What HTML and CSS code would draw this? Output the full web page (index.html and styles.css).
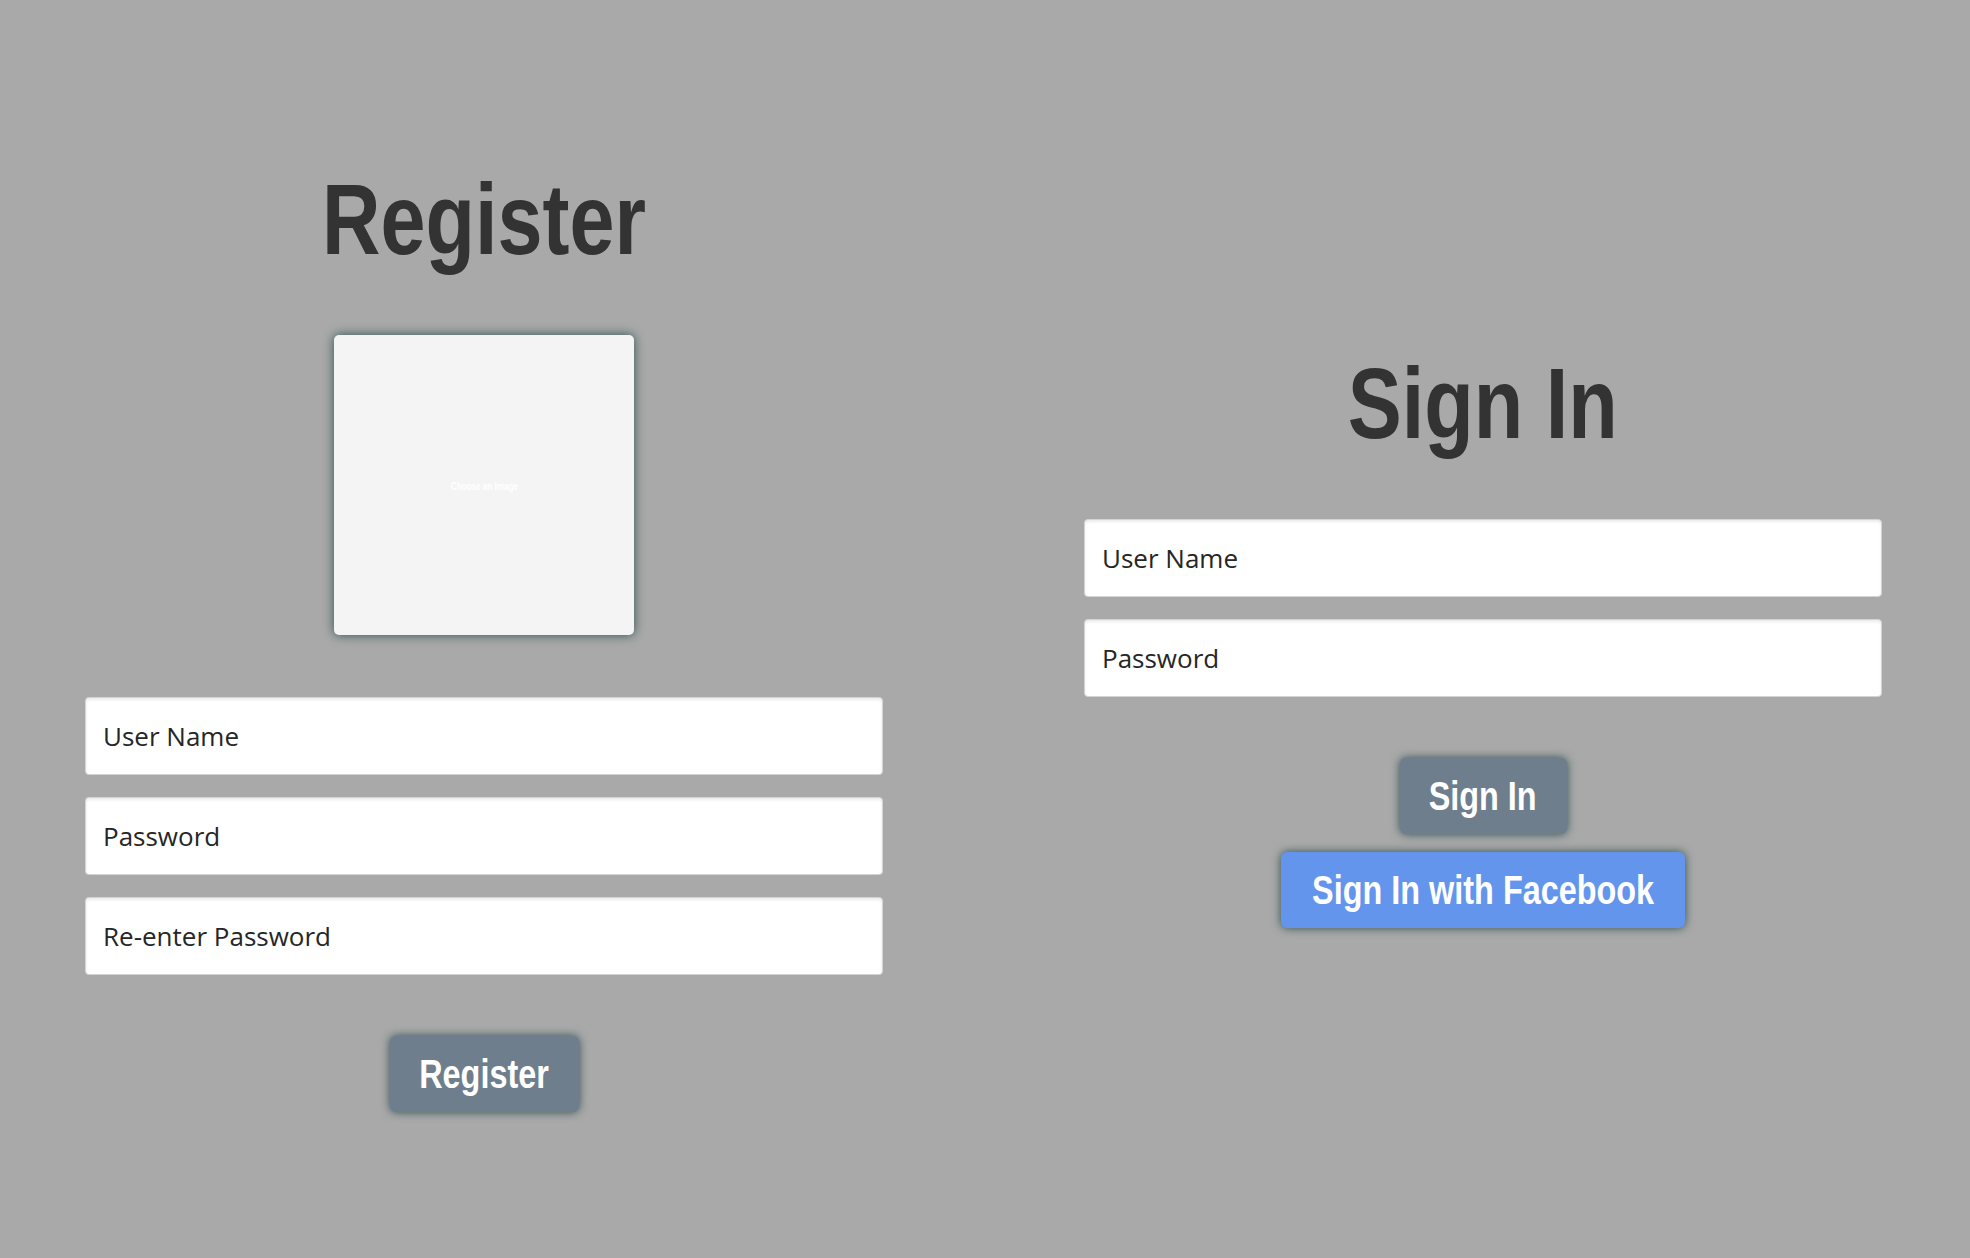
FILE: index.html
```html
<!DOCTYPE html>
<html lang="en">
<head>
<meta charset="utf-8">
<title>Register / Sign In</title>
<link rel="stylesheet" href="styles.css">
</head>
<body>
<main class="page">
  <section class="column">
    <h1 class="title"><span class="narrow">Register</span></h1>
    <div class="image-picker"><span class="image-label narrow">Choose an Image</span></div>
    <div class="fields">
      <input class="field" type="text" placeholder="User Name">
      <input class="field" type="password" placeholder="Password">
      <input class="field" type="password" placeholder="Re-enter Password">
    </div>
    <button class="btn btn-slate btn-register" type="button"><span class="narrow">Register</span></button>
  </section>
  <section class="column">
    <h1 class="title"><span class="narrow">Sign In</span></h1>
    <div class="fields">
      <input class="field" type="text" placeholder="User Name">
      <input class="field" type="password" placeholder="Password">
    </div>
    <div class="actions">
      <button class="btn btn-slate btn-signin" type="button"><span class="narrow">Sign In</span></button>
      <button class="btn btn-facebook" type="button"><span class="narrow">Sign In with Facebook</span></button>
    </div>
  </section>
</main>
</body>
</html>
```

FILE: styles.css
```css
* { box-sizing: border-box; }

html, body {
  margin: 0;
  padding: 0;
  background: #a9a9a9;
}

.page {
  height: 1258px;
  padding: 23px 87px 0 85px;
  display: flex;
  align-items: center;
  gap: 201px;
}

.column {
  width: 798px;
  display: flex;
  flex-direction: column;
  align-items: center;
}

/* Arial Narrow look: Liberation Sans compressed horizontally */
.narrow {
  display: inline-block;
  transform: scaleX(0.81);
  white-space: nowrap;
}

.title {
  margin: 0 0 66px;
  font-family: "Liberation Sans", Arial, sans-serif;
  font-weight: bold;
  font-size: 100px;
  line-height: 100px;
  color: #333333;
  text-align: center;
  width: 100%;
}

.image-picker {
  width: 300px;
  height: 300px;
  margin-bottom: 62px;
  background: #f4f4f4;
  border-radius: 5px;
  box-shadow: 0 0 11px #2f4f4f;
  display: flex;
  align-items: center;
  justify-content: center;
}

.image-label {
  font-family: "Liberation Sans", sans-serif;
  font-weight: bold;
  font-size: 10px;
  color: #ffffff;
  margin-top: 2px;
}

.fields {
  width: 100%;
  display: flex;
  flex-direction: column;
  gap: 22px;
}

.field {
  width: 100%;
  height: 78px;
  padding: 0 17px;
  border: 1px solid #d4d4d4;
  border-radius: 4px;
  background: #ffffff;
  box-shadow: inset 0 2px 3px rgba(0, 0, 0, 0.08);
  font-family: "Open Sans", sans-serif;
  font-size: 26px;
  color: #222;
  outline: none;
}

.field::placeholder {
  color: #262626;
  opacity: 1;
}

.actions {
  margin-top: 61px;
  display: flex;
  flex-direction: column;
  align-items: center;
  gap: 18px;
}

.btn {
  height: 76px;
  padding: 0;
  border: none;
  border-radius: 6px;
  font-family: "Liberation Sans", Arial, sans-serif;
  font-weight: bold;
  font-size: 40px;
  color: #ffffff;
  box-shadow: 0 0 10px #2f4f4f;
  cursor: pointer;
  display: flex;
  align-items: center;
  justify-content: center;
}

.btn-register { margin-top: 61px; width: 189px; }

.btn-signin { width: 167px; }

.btn-slate { background: #6e7e8d; }

.btn-facebook { background: #6495ed; width: 404px; }
```
